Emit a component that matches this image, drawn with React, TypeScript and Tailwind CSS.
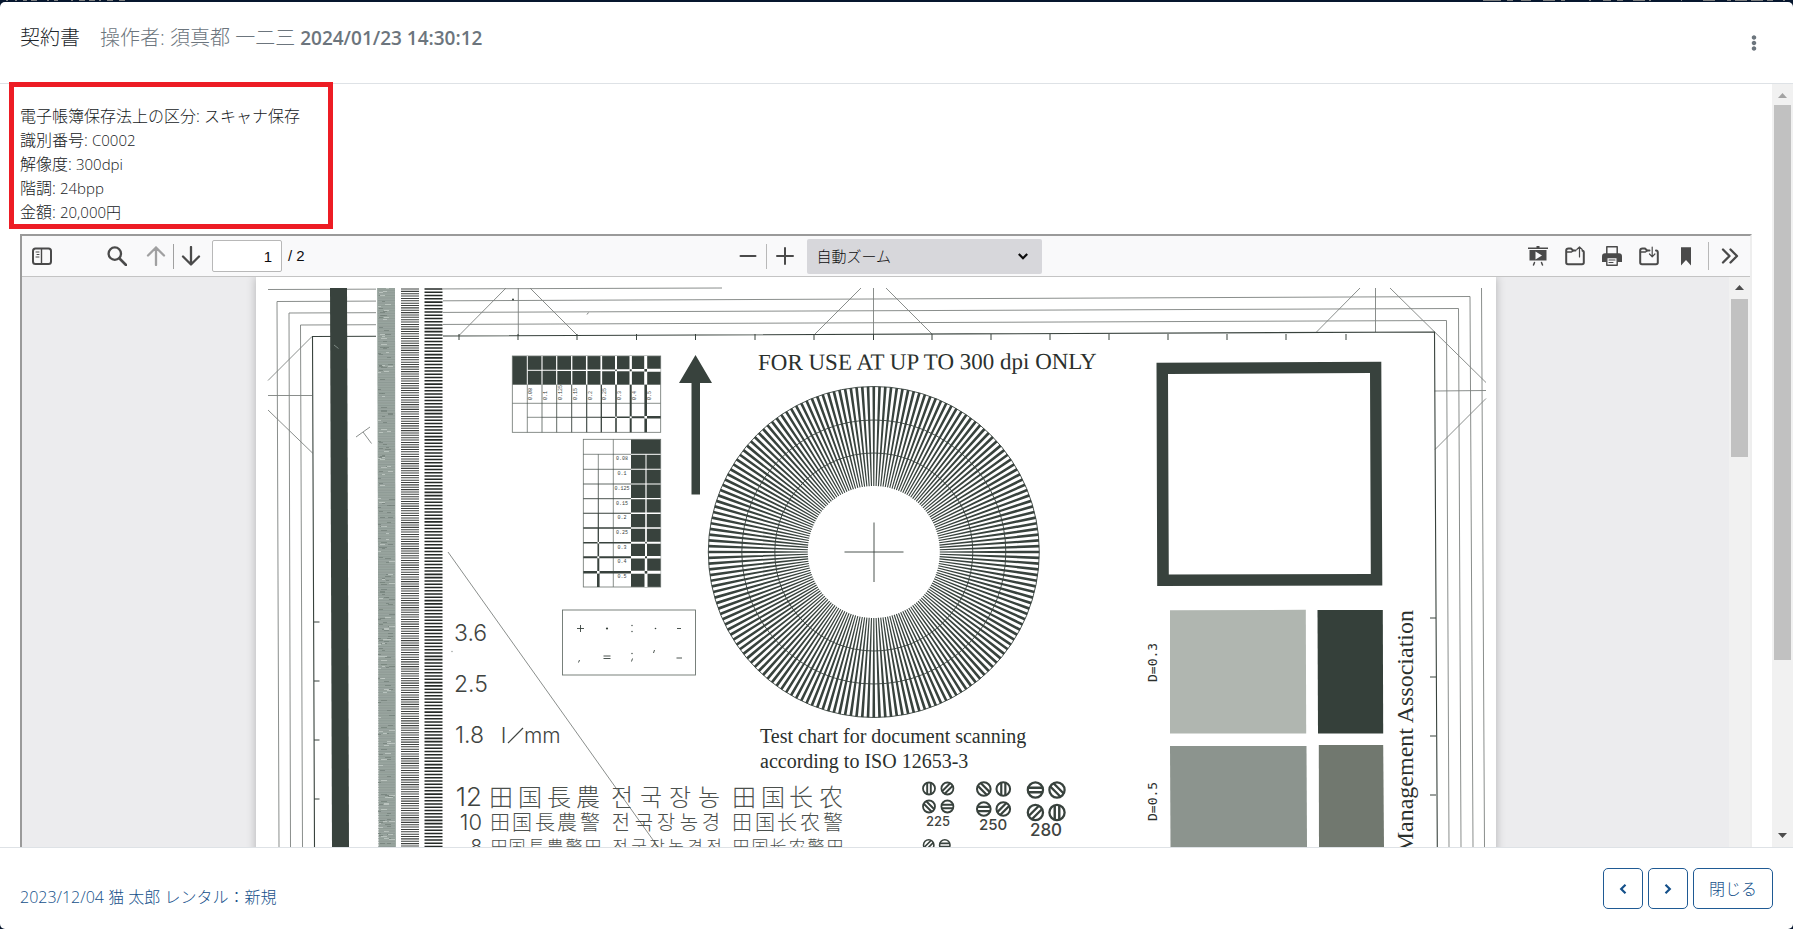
import React from 'react';
import { FaEllipsisV } from 'react-icons/fa';

const INK = '#38423d';

const details = [
  { label: '電子帳簿保存法上の区分', value: 'スキャナ保存', wide: true },
  { label: '識別番号', value: 'C0002' },
  { label: '解像度', value: '300dpi' },
  { label: '階調', value: '24bpp' },
  { label: '金額', value: '20,000円' },
];

const gridLabels = ['0.08', '0.1', '0.125', '0.15', '0.2', '0.25', '0.3', '0.4', '0.5'];
const gridWeights = [0.6, 0.7, 0.8, 0.9, 1.1, 1.3, 1.6, 2, 2.6];

const topTicks = [459, 518, 577, 636.5, 695.5, 755, 814, 873.5, 932, 991, 1050, 1109, 1168, 1227, 1286, 1346];
const leftTicks = [622, 681, 740, 799];
const rightTicks = [618, 677, 736, 795];

const spokes = Array.from({ length: 180 }, (_, i) => {
  const point = (r: number, deg: number) => {
    const a = (deg * Math.PI) / 180;
    return `${(873.8 + r * Math.cos(a)).toFixed(2)} ${(552 + r * Math.sin(a)).toFixed(2)}`;
  };
  const d = i * 2;
  return `M${point(66, d - 0.47)}L${point(165.5, d - 0.47)}L${point(165.5, d + 0.47)}L${point(66, d + 0.47)}Z`;
}).join('');

// horizontal stripes from the top of the sheet down to its visible end
const stripes = (left: number, width: number, period: number) => {
  let d = '';
  for (let y = 289; y < 847; y += period) d += `M${left} ${y.toFixed(2)}h${width}`;
  return d;
};

// short broken dashes, spread unevenly over the finest strip
const dashes = (seed: number, count: number) => {
  let d = '';
  let n = seed;
  for (let i = 0; i < count; i++) {
    n = (n * 16807) % 2147483647;
    const y = 288.5 + (n % 558);
    n = (n * 16807) % 2147483647;
    const x = 378 + (n % 12);
    d += `M${x} ${y}h${3 + (n % 4)}`;
  }
  return d;
};

const cjkRows = [
  {
    size: 24,
    y: 806,
    cells: [
      ['田', 501], ['国', 530], ['長', 559], ['農', 588],
      ['전', 622], ['국', 651], ['장', 680], ['농', 709],
      ['田', 744], ['国', 773], ['长', 801], ['农', 831],
    ],
  },
  {
    size: 20,
    y: 830,
    cells: [
      ['田', 500], ['国', 522], ['長', 545], ['農', 567], ['警', 590],
      ['전', 621], ['국', 644], ['장', 666], ['농', 689], ['경', 711],
      ['田', 742], ['国', 765], ['长', 787], ['农', 810], ['警', 833],
    ],
  },
  {
    size: 17,
    y: 853,
    cells: [
      ['田', 499], ['国', 517], ['長', 536], ['農', 555], ['警', 574], ['田', 593],
      ['전', 620], ['국', 639], ['장', 657], ['농', 676], ['경', 695], ['전', 714],
      ['田', 741], ['国', 760], ['长', 778], ['农', 797], ['警', 816], ['田', 835],
    ],
  },
] as { size: number; y: number; cells: [string, number][] }[];

// x, y, radius, stripe angle
const stamps = [
  [929, 788.5, 6, 0], [947.4, 788.5, 6, 45], [929, 806.5, 6, -45], [947.4, 806.5, 6, 90],
  [983.8, 789, 6.8, -45], [1003.3, 789, 6.8, 0], [983.8, 809, 6.8, 90], [1003.3, 809, 6.8, 45],
  [1035.4, 790, 7.6, 90], [1057, 790, 7.6, -45], [1035.4, 812.5, 7.6, 45], [1057, 812.5, 7.6, 0],
  [928.7, 845, 5.2, 45], [944.8, 845, 5.2, 90],
];

const Stamp = ({ x, y, r, angle }: { x: number; y: number; r: number; angle: number }) => (
  <g transform={`translate(${x} ${y}) rotate(${angle})`} stroke={INK} fill="none">
    <circle r={r} strokeWidth={r * 0.3} />
    <path d={`M${-r * 0.3} ${-r}V${r}M${r * 0.3} ${-r}V${r}`} strokeWidth={r * 0.32} />
  </g>
);

const HorizontalGrid = () => {
  const cols = [527.3, 542, 556.7, 571.7, 586.7, 601.3, 616, 630.7, 645.7];
  return (
    <g>
      <rect x="512.3" y="356" width="148.4" height="28.7" fill={INK} />
      <rect x="512.3" y="356" width="148.4" height="76.3" fill="none" stroke="#6b736e" strokeWidth="0.8" />
      <path d="M512.3 403.3H660.7" stroke="#6b736e" strokeWidth="0.8" />
      {cols.map((x, i) => {
        const w = gridWeights[i];
        const next = cols[i + 1] ?? 660.7;
        return (
          <g key={x}>
            <path d={`M${x} 356V384.7M${x} 370.3H${next}`} stroke="#fff" strokeWidth={w + 0.4} />
            <path d={`M${x} 384.7V432.3M${x} 417.3H${next}`} stroke={INK} strokeWidth={w} />
            {i > 5 && <rect x={x - w / 2} y={370.3 - w / 2} width={w} height={w} fill={INK} />}
            {i > 5 && <rect x={x - w / 2} y={417.3 - w / 2} width={w} height={w} fill="#fff" />}
            <text
              transform={`translate(${x + 5} 400) rotate(-90)`}
              fontSize="5"
              fontFamily="'Liberation Mono', monospace"
              fill={INK}
            >
              {gridLabels[i]}
            </text>
          </g>
        );
      })}
    </g>
  );
};

const VerticalGrid = () => {
  const rows = [454.3, 469.3, 484, 498.7, 513.3, 528, 542.7, 557.3, 572.3];
  return (
    <g>
      <rect x="631" y="439.3" width="29.7" height="147.7" fill={INK} />
      <rect x="583.3" y="439.3" width="77.4" height="147.7" fill="none" stroke="#6b736e" strokeWidth="0.8" />
      <path d="M613.3 439.3V587" stroke="#6b736e" strokeWidth="0.8" />
      {rows.map((y, i) => {
        const w = gridWeights[i];
        const next = rows[i + 1] ?? 587;
        return (
          <g key={y}>
            <path d={`M631 ${y}H660.7M646 ${y}V${next}`} stroke="#fff" strokeWidth={w + 0.4} />
            <path d={`M583.3 ${y}H631M598.3 ${y}V${next}`} stroke={INK} strokeWidth={w} />
            {i > 5 && <rect x={646 - w / 2} y={y - w / 2} width={w} height={w} fill={INK} />}
            {i > 5 && <rect x={598.3 - w / 2} y={y - w / 2} width={w} height={w} fill="#fff" />}
            <text
              x="622"
              y={y + 6}
              textAnchor="middle"
              fontSize="5"
              fontFamily="'Liberation Mono', monospace"
              fill={INK}
            >
              {gridLabels[i]}
            </text>
          </g>
        );
      })}
    </g>
  );
};

const TestChart = () => (
  <svg viewBox="256 277 1240 570" width="1240" height="570" className="block bg-white">
    {/* registration frames */}
    <g fill="none" stroke="#7d817f" strokeWidth="0.9">
      <path d="M268 289.5L722 288" />
      <path d="M279 847L277 301.5L1470 296.5L1473 847" />
      <path d="M290.5 847L289 313L1458.5 308.5L1461 847" />
      <path d="M302.5 847L300.5 325L1446.5 320.5L1449 847" />
      <path d="M1481.5 288L1484.5 847" />
      <path d="M268 380.5L312 336.5M268 395.5H312M268 410L312.5 453" />
      <path d="M506 288L459 335.5M518.3 288V336M530 288L577 335" />
      <path d="M861 288L815 334M873.5 288V334M886 288L932 334" />
      <path d="M1360 288L1316.5 332M1375.5 288V332M1390 288L1486 382.5" />
      <path d="M1434.5 391L1486 390.5M1486 398.5L1435 449.5" />
      <path d="M448 552L658 847" />
      <path d="M356 437L370 427M363 432L371.5 443.5" />
    </g>
    <path d="M314.5 847L312.5 336.5L1434.5 332L1437.3 847" fill="none" stroke={INK} strokeWidth="1.1" />
    <g stroke={INK} strokeWidth="1">
      {topTicks.map((x) => <path key={x} d={`M${x} 334V340`} />)}
      {leftTicks.map((y) => <path key={y} d={`M314 ${y}H319.5`} />)}
      {rightTicks.map((y) => <path key={y} d={`M1430 ${y}H1436`} />)}
    </g>
    <circle cx="513" cy="299.5" r="1" fill={INK} />
    <circle cx="452" cy="651.5" r="0.8" fill="#a3a8a5" />
    <path d="M587 314.5L588.5 312.5" stroke="#7d817f" />

    {/* line density strips */}
    <path d="M330 288H347L349 847H332Z" fill={INK} />
    <path d="M334 345L338.5 348.5" stroke="#7e8a84" />
    <rect x="376" y="288" width="67" height="559" fill="#fff" />
    <path d="M377 288H395L396 847H379Z" fill="#a0aca6" />
    <path d={stripes(378, 17, 1.64)} stroke="#8a9690" strokeWidth="0.8" />
    <path d={dashes(7, 150)} stroke="#75817b" strokeWidth="0.8" />
    <path d={dashes(41, 90)} stroke="#c3ccc7" strokeWidth="0.8" />
    <path d={stripes(401, 18, 2.36)} stroke="#3d403e" strokeWidth="1.05" />
    <path d={stripes(424.5, 18, 3.28)} stroke="#252a27" strokeWidth="1.55" />

    <HorizontalGrid />
    <VerticalGrid />
    <path d="M695.5 355L712 383H700V494.5H691.5V383H679Z" fill={INK} />

    {/* punctuation box */}
    <rect x="562.5" y="610" width="133" height="65" fill="none" stroke="#6b736e" strokeWidth="0.9" />
    <g stroke={INK} strokeWidth="0.9" fill="none">
      <path d="M577 628.5H584M580.5 625V632M677 628.5H681M603.5 656H610.5M603.5 658.5H610.5M676.5 658H682" />
      <path d="M579.5 660L578.5 662.5M632.5 658.5L631.5 661.5M654.5 650L653.5 653" />
    </g>
    <g fill={INK}>
      <circle cx="607" cy="628.5" r="1.1" />
      <circle cx="632" cy="625.5" r="0.7" />
      <circle cx="632" cy="631.5" r="0.7" />
      <circle cx="655.5" cy="628.5" r="0.8" />
      <circle cx="632" cy="653.5" r="0.7" />
    </g>

    {/* star target */}
    <path d={spokes} fill={INK} />
    <g fill="none" stroke={INK} strokeWidth="0.9">
      <circle cx="873.8" cy="552" r="165.5" />
      <circle cx="873.8" cy="552" r="132" />
      <circle cx="873.8" cy="552" r="99" />
      <path d="M844.5 552H903.5M874 522.5V582" />
    </g>

    {/* density patches */}
    <path
      d="M1156.5 362.8L1381.3 361.8L1382.3 585.5L1157.2 586ZM1168 374L1168.8 574.5L1370.8 574L1370 373Z"
      fillRule="evenodd"
      fill={INK}
    />
    <path d="M1170 610.3L1305.8 609.8L1306.2 733.5H1170Z" fill="#b0b6b0" />
    <path d="M1317.5 610H1382.8L1383.2 733.5H1318Z" fill="#35403a" />
    <path d="M1170 746H1306.5L1307 847H1170.5Z" fill="#8c948e" />
    <path d="M1318.8 745H1383.2L1384 847H1319Z" fill="#71786f" />

    <g fill="#2b302d" fontFamily="'Liberation Serif', serif">
      <text transform="translate(758 370) rotate(-0.2)" fontSize="23">FOR USE AT UP TO 300 dpi ONLY</text>
      <text x="760" y="743" fontSize="20">Test chart for document scanning</text>
      <text x="760" y="768" fontSize="20">according to ISO 12653-3</text>
      <text transform="translate(1413 610) rotate(-90)" textAnchor="end" fontSize="24">Management Association</text>
    </g>
    <g fill="#2b302d" fontSize="13" fontFamily="'DejaVu Sans Mono', monospace">
      <text transform="translate(1157 682) rotate(-90)">D=0.3</text>
      <text transform="translate(1157 821) rotate(-90)">D=0.5</text>
    </g>
    <g fill="#3f4441" fontFamily="Inter, 'Liberation Sans', sans-serif">
      <g fontWeight="300">
        <text x="454" y="641" fontSize="23">3.6</text>
        <text x="454" y="692" fontSize="23">2.5</text>
        <text x="455" y="743" fontSize="23">1.8</text>
        <text x="501" y="743" fontSize="22">l</text>
        <text x="524" y="743" fontSize="21">mm</text>
        <path d="M508 743L523 728" stroke="#3f4441" strokeWidth="1.2" />
        <text x="482" y="806" fontSize="26" textAnchor="end">12</text>
        <text x="482" y="830" fontSize="22" textAnchor="end">10</text>
        <text x="482" y="853" fontSize="19" textAnchor="end">8</text>
      </g>
      <g textAnchor="middle" fontWeight="500">
        <text x="938" y="826" fontSize="13">225</text>
        <text x="993" y="830" fontSize="15">250</text>
        <text x="1046" y="836" fontSize="17">280</text>
      </g>
    </g>
    <g fill="#4b504d" textAnchor="middle" fontWeight="300" fontFamily="'Noto Sans CJK SC', sans-serif">
      {cjkRows.map((row) =>
        row.cells.map(([char, x]) => (
          <text key={`${row.y}-${x}`} x={x} y={row.y} fontSize={row.size}>{char}</text>
        ))
      )}
    </g>
    {stamps.map(([x, y, r, angle]) => <Stamp key={`${x}-${y}`} x={x} y={y} r={r} angle={angle} />)}
  </svg>
);

const ToolButton = ({ label, children }: { label: string; children: React.ReactNode }) => (
  <button type="button" aria-label={label} className="flex h-8 w-7 shrink-0 items-center justify-center text-[#4a4a4a]">
    <svg viewBox="0 0 20 20" width="20" height="20" fill="none" stroke="currentColor" strokeWidth="2" strokeLinecap="round" strokeLinejoin="round">
      {children}
    </svg>
  </button>
);

const Toolbar = () => (
  <div className="grid h-[41px] shrink-0 grid-cols-[1fr_auto_1fr] items-center border-b border-[#c4c4c4] bg-[#f9f9fa] px-[6px] font-['Liberation_Sans',sans-serif] text-[15px] text-[#0c0c0d]">
    <div className="flex items-center">
      <ToolButton label="サイドバー">
        <rect x="1" y="2.5" width="18" height="15.5" rx="2.5" />
        <path d="M9.5 3V18" strokeWidth="1.4" />
        <path d="M4 6H7M5 8.5H7M4 11H7" strokeWidth="1" />
      </ToolButton>
      <div className="ml-[47px] flex items-center">
        <ToolButton label="検索">
          <circle cx="7.8" cy="7.6" r="6.2" strokeWidth="2.3" />
          <path d="M12.5 12.5L19 19" strokeWidth="2.6" />
        </ToolButton>
      </div>
      <div className="ml-[11px] flex items-center">
        <div className="flex opacity-50">
          <ToolButton label="前のページ">
            <path d="M10 19V1.5M2 9.5L10 1.5L18 9.5" strokeWidth="2.3" />
          </ToolButton>
        </div>
        <div className="mx-[3px] h-[25px] w-px bg-[#a0a0a0]" />
        <ToolButton label="次のページ">
          <path d="M10 1V18.5M2 10.5L10 18.5L18 10.5" strokeWidth="2.3" />
        </ToolButton>
      </div>
      <input
        aria-label="ページ"
        defaultValue="1"
        className="ml-[7px] h-8 w-[70px] rounded-[2px] border border-[#b8b8b8] bg-white pr-[9px] text-right"
      />
      <span className="ml-[6px]">/ 2</span>
    </div>

    <div className="ml-[3px] flex items-center">
      <ToolButton label="縮小">
        <path d="M2.5 10H17.5" />
      </ToolButton>
      <div className="mx-1 h-[25px] w-px bg-[#b8b8b8]" />
      <ToolButton label="拡大">
        <path d="M2 10H18M10 2V18" />
      </ToolButton>
      <div className="relative ml-2">
        <select
          aria-label="ズーム"
          className="h-[35px] w-[235px] appearance-none rounded-[2px] bg-[#d7d7db] pl-[10px] font-['Noto_Sans_CJK_JP',sans-serif] text-[15px] font-light"
        >
          <option>自動ズーム</option>
        </select>
        <svg viewBox="0 0 10 7" width="10" height="7" className="pointer-events-none absolute top-[14px] right-[14px]" fill="none" stroke="#0c0c0d" strokeWidth="2.2">
          <path d="M0.8 1L5 5.2L9.2 1" />
        </svg>
      </div>
    </div>

    <div className="flex items-center justify-end">
      <div className="flex gap-[9px]">
        <ToolButton label="プレゼンテーション">
          <path d="M0 2.2H20M8.5 0.8H11.5" strokeWidth="1.6" strokeLinecap="butt" />
          <path d="M1.5 4H18.5V14.5H1.5Z" fill="currentColor" stroke="none" />
          <path d="M7.5 5.5L14 9.5L7.5 13.5Z" fill="#f9f9fa" stroke="none" />
          <path d="M6.5 16.5L5.5 19M13.5 16.5L14.5 19" strokeWidth="1.5" />
        </ToolButton>
        <ToolButton label="開く">
          <path d="M10.5 4.5H8L6 2.5H3.5C2 2.5 1.2 3.3 1.2 4.5V16.5C1.2 17.6 2 18.2 3 18.2H17C18.2 18.2 18.8 17.5 18.8 16.5V6.5Q18.8 4.8 17.5 4.8" />
          <path d="M1.5 6H6.5L8.5 4.5" strokeWidth="1.4" />
          <path d="M14.5 11V1M11.8 3.5L14.5 0.8L17.2 3.5" strokeWidth="1.2" />
        </ToolButton>
        <ToolButton label="印刷">
          <path d="M4.8 8V0.8H15.2V8" strokeWidth="1.5" />
          <path d="M0 10.5Q0 7.2 3 7.2H17Q20 7.2 20 10.5V16H0Z" fill="currentColor" stroke="none" />
          <rect x="4.8" y="11.5" width="10.4" height="7.7" fill="#f9f9fa" strokeWidth="1.4" />
          <path d="M7 14H13M7 16.5H11" strokeWidth="1.1" />
        </ToolButton>
        <ToolButton label="ダウンロード">
          <path d="M10.5 4.5H8L6 2.5H3.5C2 2.5 1.2 3.3 1.2 4.5V16.5C1.2 17.6 2 18.2 3 18.2H17C18.2 18.2 18.8 17.5 18.8 16.5V6.5Q18.8 4.6 17 4.6" />
          <path d="M1.5 6H6.5L8.5 4.5" strokeWidth="1.4" />
          <path d="M13.2 1V10.5M10.5 8L13.2 10.8L15.9 8" strokeWidth="1.2" />
        </ToolButton>
        <ToolButton label="ブックマーク">
          <path d="M5 1.2H15V19.5L10 14L5 19.5Z" fill="currentColor" stroke="none" />
        </ToolButton>
      </div>
      <div className="ml-2 mr-[7px] h-7 w-px bg-[#b8b8b8]" />
      <ToolButton label="ツール">
        <path d="M3 3.5L9.5 10L3 16.5M10.5 3.5L17 10L10.5 16.5" strokeWidth="2.3" />
      </ToolButton>
    </div>
  </div>
);

const Arrow = ({ down, color }: { down?: boolean; color: string }) => (
  <svg viewBox="0 0 9 5" width="9" height="5" className="shrink-0">
    <path d={down ? 'M0 0H9L4.5 5Z' : 'M0 5H9L4.5 0Z'} fill={color} />
  </svg>
);

const PdfViewer = () => (
  <div className="flex h-[760px] flex-col border-2 border-[#eeeeee] border-t-[#9a9a9a] border-l-[#9a9a9a]">
    <Toolbar />
    <div className="flex min-h-0 flex-1 bg-[#ececee]">
      <div className="flex min-w-0 flex-1 justify-center overflow-hidden">
        <div className="shrink-0 bg-white shadow-[0_0_9px_rgba(0,0,0,0.25)]">
          <TestChart />
        </div>
      </div>
      <div className="flex w-[21px] shrink-0 flex-col items-center bg-[#f1f1f1] pt-2">
        <Arrow color="#4d4d4d" />
        <div className="mt-[9px] h-[158px] w-[17px] bg-[#c1c1c1]" />
      </div>
    </div>
  </div>
);

// lower edge of the dimmed navigation bar behind the dialog
const Backdrop = () => (
  <div className="flex h-[2px] shrink-0 justify-between overflow-hidden">
    <svg width="130" height="2" fill="none" stroke="#7d7f80" strokeWidth="1">
      <path d="M6 0.5H8M15 0.5H17M23 0.5H27M31 0.5H37M47 0.5H49M54 0.5H58M71 0.5H73M79 0.5H85M89 0.5H95M99 0.5H101M107 0.5H113M119 0.5H125" />
    </svg>
    <svg width="310" height="2" fill="none" stroke="#7d7f80" strokeWidth="1">
      <path d="M0 0.5H18M24 0.5H30M38 0.5H48M60 0.5H72M78 0.5H82M106 0.5H108M120 0.5H128M134 0.5H140M150 0.5H162M166 0.5H168M198 0.5H199M220 0.5H232M244 0.5H248M252 0.5H264M268 0.5H280M284 0.5H290M300 0.5H302" />
    </svg>
  </div>
);

export default function App() {
  return (
    <div className="flex h-screen flex-col overflow-hidden bg-[#06162e] font-['Open_Sans','Noto_Sans_CJK_JP',sans-serif] text-base text-[#212529]">
      <Backdrop />
      <div className="flex min-h-0 flex-1 flex-col rounded-[5px] bg-white">
        <header className="flex h-[82px] shrink-0 justify-between border-b border-[#dee2e6] px-5 pt-5">
          <h1 className="flex h-8 items-center gap-5 text-xl font-light">
            <span>契約書</span>
            <span className="flex items-center gap-[5px] text-[#6c757d]">
              操作者: 須真都 一二三
              <time className="text-[19px] font-semibold">2024/01/23 14:30:12</time>
            </span>
          </h1>
          <button type="button" aria-label="メニュー" className="mt-[11px] mr-[12px] flex h-5 w-[14px] items-center justify-center text-[#6c757d]">
            <FaEllipsisV className="h-4 w-4" />
          </button>
        </header>

        <main className="flex min-h-0 flex-1">
          <div className="relative min-w-0 flex-1 px-5 pt-5">
            <div className="absolute top-[-2px] left-[9px] h-[147px] w-[324px] border-[5px] border-[#ed1c24]" />
            <ul className="mb-[10px] font-light text-[#16191c]">
              {details.map((item) => (
                <li key={item.label} className="h-6 leading-6">
                  {item.label}:{' '}
                  <span className={item.wide ? '' : 'text-[15px]'}>{item.value}</span>
                </li>
              ))}
            </ul>
            <div className="h-[613px] overflow-hidden">
              <PdfViewer />
            </div>
          </div>
          <div className="flex w-[21px] shrink-0 flex-col items-center bg-[#f1f1f1] pt-[9px] pb-[9px]">
            <Arrow color="#a3a3a3" />
            <div className="mt-[7px] h-[555px] w-[17px] bg-[#c1c1c1]" />
            <div className="flex-1" />
            <Arrow down color="#4d4d4d" />
          </div>
        </main>

        <footer className="flex h-[82px] shrink-0 items-start justify-between border-t border-[#dee2e6] px-5 pt-5 text-[#14508a]">
          <a href="#" className="mt-[17px] leading-6 font-light">2023/12/04 猫 太郎 レンタル：新規</a>
          <div className="flex gap-[5px]">
            <button type="button" aria-label="前へ" className="flex h-[41px] w-10 items-center justify-center rounded-[5px] border border-[#1f5a94]">
              <svg viewBox="0 0 8 10" width="8" height="10" fill="none" stroke="currentColor" strokeWidth="2.2">
                <path d="M6.5 0.8L2.2 5L6.5 9.2" />
              </svg>
            </button>
            <button type="button" aria-label="次へ" className="flex h-[41px] w-10 items-center justify-center rounded-[5px] border border-[#1f5a94]">
              <svg viewBox="0 0 8 10" width="8" height="10" fill="none" stroke="currentColor" strokeWidth="2.2">
                <path d="M1.5 0.8L5.8 5L1.5 9.2" />
              </svg>
            </button>
            <button type="button" className="h-[41px] w-20 rounded-[5px] border border-[#1f5a94] font-light">
              閉じる
            </button>
          </div>
        </footer>
      </div>
    </div>
  );
}
